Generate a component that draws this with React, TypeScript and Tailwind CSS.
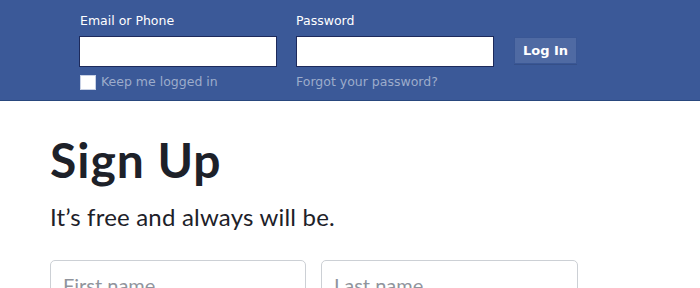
export default function App() {
  return (
    <div className="w-[700px] h-[288px] overflow-hidden bg-white">
      {/* Top login bar */}
      <div className="h-[101px] bg-[#3b5998] border-b border-[#29487d]">
        <div className="flex pl-[79px] pt-[13px] gap-[19px] font-['DejaVu_Sans',sans-serif]">
          <div className="flex flex-col">
            <label className="text-[12.5px] leading-[16px] text-white h-[23px] pl-px">Email or Phone</label>
            <input className="w-[198px] h-[31px] bg-white border border-[#1d2a5b] outline-none" />
            <div className="flex items-center gap-[5px] mt-[7px] pl-px">
              <span className="w-[16px] h-[15px] bg-white border border-[#c8d1e5]" />
              <span className="text-[12.5px] leading-[16px] text-[#9daccb]">Keep me logged in</span>
            </div>
          </div>
          <div className="flex flex-col">
            <label className="text-[12.5px] leading-[16px] text-white h-[23px]">Password</label>
            <input type="password" className="w-[198px] h-[31px] bg-white border border-[#1d2a5b] outline-none" />
            <a className="mt-[7px] text-[12.5px] leading-[16px] text-[#9daccb]">Forgot your password?</a>
          </div>
          <div className="pt-[24px] pl-px">
            <button className="w-[63px] h-[27px] bg-[#4f6aa3] border border-[#3a5795] text-white text-[13px] font-bold font-['DejaVu_Sans',sans-serif] shadow-[0_1px_0_rgba(0,0,0,0.1)]">
              Log In
            </button>
          </div>
        </div>
      </div>

      {/* Sign up */}
      <div className="pl-[50px] pt-[31px] font-['Lato',sans-serif] text-[#1d2129]">
        <h1 className="text-[48px] leading-[56px] font-bold tracking-[1px]">Sign Up</h1>
        <p className="mt-[14px] text-[24px] leading-[30px] tracking-[0.2px]">It’s free and always will be.</p>
        <div className="flex gap-[15px] mt-[28px]">
          <div className="w-[256px] h-[42px] border border-[#ccd0d5] rounded-[5px] px-[12px] pt-[12px] text-[20px] leading-[24px] text-[#90949c]">
            First name
          </div>
          <div className="w-[257px] h-[42px] border border-[#ccd0d5] rounded-[5px] px-[12px] pt-[12px] text-[20px] leading-[24px] text-[#90949c]">
            Last name
          </div>
        </div>
      </div>
    </div>
  );
}
